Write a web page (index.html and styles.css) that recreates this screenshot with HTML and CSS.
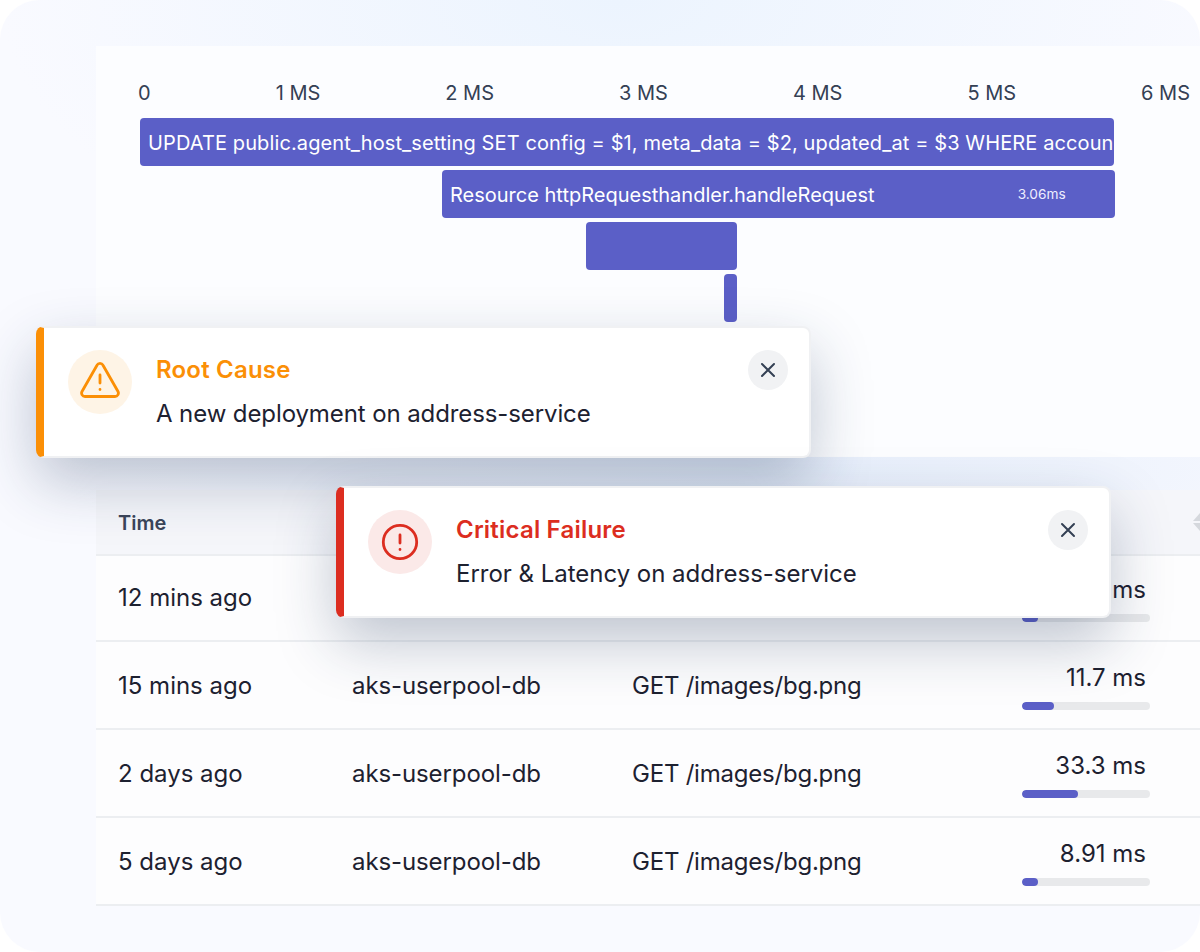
FILE: index.html
```html
<!DOCTYPE html>
<html lang="en">
<head>
<meta charset="utf-8">
<title>Trace view</title>
<link rel="stylesheet" href="styles.css">
</head>
<body>
<main class="frame">
  <section class="chart">
    <div class="ruler">
      <span>0</span><span>1 MS</span><span>2 MS</span><span>3 MS</span><span>4 MS</span><span>5 MS</span><span>6 MS</span>
    </div>
    <div class="bars">
      <div class="bar bar-a"><span class="bar-label">UPDATE public.agent_host_setting SET config = $1, meta_data = $2, updated_at = $3 WHERE accoun</span></div>
      <div class="bar bar-b"><span class="bar-label">Resource httpRequesthandler.handleRequest</span><span class="bar-time">3.06ms</span></div>
      <div class="bar bar-c"></div>
      <div class="bar bar-d"></div>
    </div>
  </section>

  <section class="table">
    <div class="thead">
      <span>Time</span>
      <svg class="sort" width="16" height="20" viewBox="0 0 16 20"><path d="M8 1l7 8H1zM8 19l-7-8h14z" fill="#d5d8dd"/></svg>
    </div>
    <div class="row row-first">
      <span>12 mins ago</span><span></span><span></span>
      <div class="metric"><span class="value">ms</span><div class="track"><div class="fill" style="width:16px"></div></div></div>
    </div>
    <div class="row">
      <span>15 mins ago</span><span>aks-userpool-db</span><span>GET /images/bg.png</span>
      <div class="metric"><span class="value">11.7 ms</span><div class="track"><div class="fill" style="width:32px"></div></div></div>
    </div>
    <div class="row">
      <span>2 days ago</span><span>aks-userpool-db</span><span>GET /images/bg.png</span>
      <div class="metric"><span class="value">33.3 ms</span><div class="track"><div class="fill" style="width:56px"></div></div></div>
    </div>
    <div class="row">
      <span>5 days ago</span><span>aks-userpool-db</span><span>GET /images/bg.png</span>
      <div class="metric"><span class="value">8.91 ms</span><div class="track"><div class="fill" style="width:16px"></div></div></div>
    </div>
  </section>

  <aside class="toast toast-warn">
    <div class="badge">
      <svg width="40" height="40" viewBox="0 0 40 40" fill="none" stroke="#fb8f06" stroke-width="2.8" stroke-linecap="round" stroke-linejoin="round"><path d="M17 3.2 2 29.5a3.4 3.4 0 0 0 3 5h30a3.4 3.4 0 0 0 3-5L23 3.2a3.4 3.4 0 0 0-6 0z"/><path d="M20 13v8M20 27.5v.1"/></svg>
    </div>
    <div class="copy">
      <h2>Root Cause</h2>
      <p>A new deployment on address-service</p>
    </div>
    <div class="close">
      <svg width="16" height="16" viewBox="0 0 16 16" fill="none" stroke="#344054" stroke-width="2" stroke-linecap="round"><path d="M2 2l12 12M14 2 2 14"/></svg>
    </div>
  </aside>

  <aside class="toast toast-crit">
    <div class="badge">
      <svg width="40" height="40" viewBox="0 0 40 40" fill="none" stroke="#dc2d20" stroke-width="2.8" stroke-linecap="round"><circle cx="20" cy="20" r="16.7"/><path d="M20 13v8M20 27.5v.1"/></svg>
    </div>
    <div class="copy">
      <h2>Critical Failure</h2>
      <p>Error &amp; Latency on address-service</p>
    </div>
    <div class="close">
      <svg width="16" height="16" viewBox="0 0 16 16" fill="none" stroke="#344054" stroke-width="2" stroke-linecap="round"><path d="M2 2l12 12M14 2 2 14"/></svg>
    </div>
  </aside>
</main>
</body>
</html>
```

FILE: styles.css
```css
* { box-sizing: border-box; }
html, body { margin: 0; background: #fff; }
body { width: 1200px; height: 952px; overflow: hidden; font-family: Inter, "Liberation Sans", sans-serif; color: #1d2130; }

.frame {
  position: relative;
  width: 1200px;
  height: 952px;
  padding: 46px 0 0 96px;
  border-radius: 40px;
  overflow: hidden;
  background:
    radial-gradient(ellipse 620px 300px at 620px 0, #ecf4fe 0%, rgba(236, 244, 254, 0) 100%),
    radial-gradient(ellipse 700px 130px at 760px 470px, #e6eefb 0%, rgba(230, 238, 251, 0) 100%),
    #f9faff;
}

.chart {
  width: 1104px;
  height: 411px;
  background: #fcfdff;
  padding-top: 34px;
}
.ruler {
  display: flex;
  justify-content: space-between;
  width: 1052px;
  margin-left: 42px;
  font-size: 20px;
  line-height: 26px;
  color: #344054;
}
.bars { display: flex; flex-direction: column; gap: 4px; margin-top: 12px; }
.bar {
  display: flex;
  align-items: center;
  height: 48px;
  padding-top: 1px;
  border-radius: 4px;
  background: #5b5fc7;
  color: #fff;
  white-space: nowrap;
  font-size: 20px;
}
.bar-a { margin-left: 44px; width: 974px; padding-left: 8px; letter-spacing: .11px; }
.bar-b { margin-left: 346px; width: 673px; padding-left: 8px; }
.bar-c { margin-left: 490px; width: 151px; }
.bar-d { margin-left: 628px; width: 13px; }
.bar-time { margin-left: 143px; margin-top: -2px; font-size: 13.7px; color: #eef; }

.table {
  width: 1104px;
  margin-top: 33px;
  background: #fdfdfe;
  font-size: 24px;
  letter-spacing: -.1px;
}
.thead {
  display: flex;
  align-items: center;
  justify-content: space-between;
  height: 66px;
  padding: 2px 0 0 22px;
  background: #f5f6fa;
  border-bottom: 2px solid #eceef1;
  font-size: 20px;
  font-weight: 600;
  letter-spacing: 0;
  color: #3b4559;
}
.sort { margin-right: -8px; margin-top: -2px; }
.row {
  display: grid;
  grid-template-columns: 234px 280px 390px 128px;
  align-items: center;
  height: 88px;
  padding: 2px 0 0 22px;
  border-bottom: 2px solid #eceef1;
}
.row > span { margin-bottom: 2px; }
.row > span:first-child { letter-spacing: 0; }
.row > span:nth-child(3) { letter-spacing: -.22px; }
.row-first { height: 86px; padding-top: 0; }
.metric { display: flex; flex-direction: column; align-items: stretch; gap: 9px; margin-top: 1px; }
.value { text-align: right; padding-right: 4px; line-height: 30px; letter-spacing: 0; }
.track { height: 8px; border-radius: 4px; background: #e8e9eb; overflow: hidden; }
.fill { height: 100%; border-radius: 4px; background: #5b5fc7; }

.toast {
  position: absolute;
  display: flex;
  align-items: flex-start;
  width: 775px;
  height: 132px;
  padding: 22px 21px 0 24px;
  background: #fff;
  border: 2px solid #f0f1f3;
  border-left-width: 8px;
  border-radius: 8px;
  box-shadow: 0 24px 60px rgba(30, 50, 85, .28);
}
.toast-warn { left: 36px; top: 326px; border-left-color: #fb8f06; }
.toast-crit { left: 336px; top: 486px; border-left-color: #dc2d20; }
.badge {
  display: flex;
  align-items: center;
  justify-content: center;
  flex: none;
  width: 64px;
  height: 64px;
  border-radius: 50%;
}
.toast-warn .badge { background: #fef4e6; }
.toast-crit .badge { background: #fbe9e8; }
.copy { flex: 1; margin-left: 24px; }
.copy h2 { margin: 0; font-size: 24px; line-height: 40px; font-weight: 600; letter-spacing: .2px; }
.toast-warn h2 { color: #fb8f06; }
.toast-crit h2 { color: #dc2d20; }
.copy p { margin: 4px 0 0; font-size: 24px; line-height: 40px; letter-spacing: -.02px; color: #1d2130; }
.toast-warn p { letter-spacing: -.1px; }
.close {
  display: flex;
  align-items: center;
  justify-content: center;
  flex: none;
  width: 40px;
  height: 40px;
  border-radius: 50%;
  background: #f1f2f4;
}
```
